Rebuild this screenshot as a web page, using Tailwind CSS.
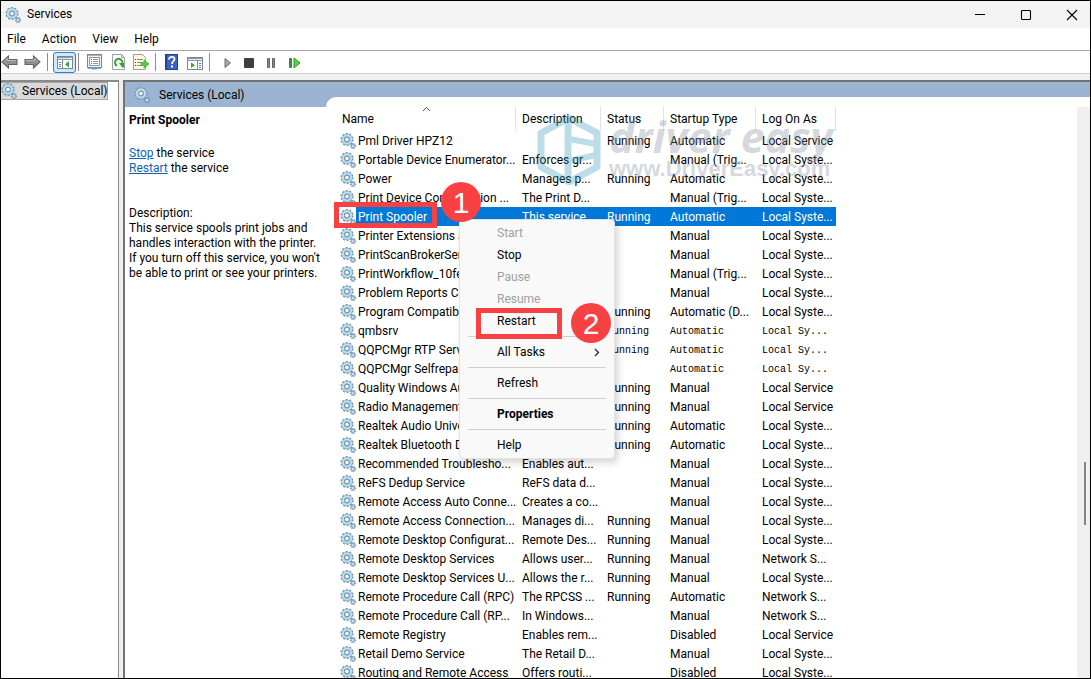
<!DOCTYPE html>
<html lang="en">
<head>
<meta charset="utf-8">
<title>Services</title>
<script src="https://cdn.jsdelivr.net/npm/@tailwindcss/browser@4"></script>
</head>
<body>
<svg class="hidden" aria-hidden="true">
  <symbol id="gear" viewBox="0 0 16 16">
    <circle cx="7" cy="6.500" r="5.600" fill="none" stroke="#7594ab" stroke-width="2" stroke-dasharray="1.900 1.600"/>
    <circle cx="7" cy="6.500" r="3.900" fill="#fff" stroke="#86b0cb" stroke-width="3.600"/>
    <circle cx="7" cy="6.500" r="4.100" fill="none" stroke="#bcdfef" stroke-width="2"/>
    <circle cx="7" cy="6.500" r="2.300" fill="#fff" stroke="#56788f" stroke-width=".8"/>
    <circle cx="13" cy="13" r="2.300" fill="none" stroke="#6b8aa2" stroke-width="1.400" stroke-dasharray="1.100 .7"/>
    <circle cx="13" cy="13" r="1.500" fill="#fff" stroke="#8ab2ca" stroke-width="1.300"/>
  </symbol>
  <symbol id="arrow" viewBox="0 0 17 14">
    <path d="M1 7 7.500 1v3.500H16v5H7.500V13Z" fill="#909090" stroke="#666" stroke-width="1.100"/>
    <path d="M3 6.700 6.700 3.200V5.600H15" fill="none" stroke="#bdbdbd"/>
  </symbol>
</svg>

<div class="relative flex h-screen flex-col overflow-hidden border border-black bg-white font-['Roboto','Noto_Sans',sans-serif] text-[12px] leading-[19px] text-black">
  <header class="flex h-[27px] shrink-0 items-center gap-[10px] bg-[#f3f3f3] pl-1">
    <svg class="size-4"><use href="#gear"/></svg>
    <h1 class="-ml-1 grow">Services</h1>
    <button class="grid h-6 w-9 place-items-center" aria-label="Minimize"><svg class="h-3 w-3" viewBox="0 0 12 12"><path d="M1 5.500h10" stroke="#000"/></svg></button>
    <button class="grid h-6 w-9 place-items-center" aria-label="Maximize"><svg class="h-3 w-3" viewBox="0 0 12 12"><rect x="1.500" y="1.500" width="9" height="9" rx=".8" fill="none" stroke="#000" stroke-width="1.100"/></svg></button>
    <button class="grid h-6 w-9 place-items-center" aria-label="Close"><svg class="h-3 w-3" viewBox="0 0 12 12"><path d="m1 1 10 10M11 1 1 11" stroke="#000" stroke-width="1.100"/></svg></button>
  </header>

  <nav class="flex h-[23px] shrink-0 items-center gap-4 border-b border-[#a8a8a8] pl-[6px]">
    <button>File</button><button>Action</button><button>View</button><button>Help</button>
  </nav>

  <div class="flex h-[23px] shrink-0 items-center border-b border-[#d0d0d0]" role="toolbar">
    <button aria-label="Back"><svg class="h-[14px] w-[17px]"><use href="#arrow"/></svg></button>
    <button class="ml-[6px] -scale-x-100" aria-label="Forward"><svg class="h-[14px] w-[17px]"><use href="#arrow"/></svg></button>
    <span class="ml-[6px] h-[18px] w-px bg-[#8c8c8c]"></span>
    <button class="ml-[5px] grid h-[21px] w-[23px] place-items-center rounded-[3px] border border-[#2c80c5] bg-[#cfe8fb]" aria-label="Show console tree">
      <svg class="h-[13px] w-4" viewBox="0 0 16 13"><rect x=".5" y=".5" width="15" height="12" fill="#fff" stroke="#7d8791"/><path d="M1 1.500h14M1 3.500h14" stroke="#8c98a4"/><path d="M1 2.500h11" stroke="#dfe6ec"/><path d="M5.500 4v8" stroke="#7d8791"/><path d="M2 6.500h2M2 8.500h2M2 10.500h2" stroke="#5d7890"/><path d="m12 5-4 3.200 4 3.200Z" fill="#3aa635"/></svg>
    </button>
    <span class="ml-[2px] h-[18px] w-px bg-[#8c8c8c]"></span>
    <button class="ml-[8px]" aria-label="Properties"><svg class="size-4" viewBox="0 0 16 16"><rect x=".5" y=".5" width="14" height="13" fill="#f4f7fa" stroke="#7d8791"/><path d="M1 1.500h13" stroke="#a9b4be"/><rect x="2.500" y="3.500" width="10" height="8" fill="#fff" stroke="#8e9aa5"/><path d="M4 5.500h1M4 7.500h1M4 9.500h1" stroke="#3f79ad"/><path d="M6 5.500h5M6 7.500h5M6 9.500h5" stroke="#8e9aa5"/><path d="M1 14.500h4M10 14.500h4" stroke="#9aa6b0"/><path d="M5 14.500h5" stroke="#5aa5dc" stroke-width="2"/></svg></button>
    <button class="ml-[8px]" aria-label="Refresh"><svg class="size-4" viewBox="0 0 16 16"><path d="M1.500.5h9l3 3v12h-12Z" fill="#fff" stroke="#9aa2aa"/><path d="M10.500.5v3h3" fill="none" stroke="#9aa2aa"/><path d="M6 11.800a3.700 3.700 0 1 1 5-1.500" fill="none" stroke="#37a532" stroke-width="2"/><path d="M8 9h5v4.500H11Z" fill="#37a532"/></svg></button>
    <button class="ml-[6px]" aria-label="Export list"><svg class="size-4" viewBox="0 0 16 16"><path d="M.5.500h9l3 3v12H.5Z" fill="#fdf8df" stroke="#a79f7d"/><path d="M2 5.500h1M2 8.500h1M2 11.500h1" stroke="#444"/><path d="M4 5.500h6M4 8.500h4M4 11.500h4" stroke="#888"/><path d="M8 8.500h3V6l5 4-5 4v-2.500H8Z" fill="#55c94a" stroke="#2f9a2a" stroke-width=".6"/></svg></button>
    <span class="ml-[6px] h-[18px] w-px bg-[#8c8c8c]"></span>
    <button class="ml-[9px]" aria-label="Help"><svg class="h-4 w-[13px]" viewBox="0 0 13 16"><rect width="13" height="16" fill="#25409a"/><rect x="2" y="1" width="10" height="14" fill="#3d62c4"/><path d="M4 5.500C4 2 9.500 2.300 9.500 5.200 9.500 7.200 7 7.300 7 10" fill="none" stroke="#fff" stroke-width="1.800"/><path d="M6 11.500h2v2H6z" fill="#fff"/></svg></button>
    <button class="ml-[9px]" aria-label="Show action pane"><svg class="mt-[2px] h-[13px] w-4" viewBox="0 0 16 13"><rect x=".5" y=".5" width="15" height="12" fill="#fff" stroke="#7d8791"/><path d="M1 1.500h14M1 3.500h14" stroke="#8c98a4"/><path d="M1 2.500h11" stroke="#dfe6ec"/><path d="M10.500 4v8" stroke="#7d8791"/><path d="M12 6.500h2M12 8.500h2M12 10.500h2" stroke="#5d7890"/><path d="m4 5.500 4 2.800-4 2.800Z" fill="#3aa635"/></svg></button>
    <span class="ml-[6px] h-[18px] w-px bg-[#8c8c8c]"></span>
    <button class="ml-[14px] pt-[2px]" aria-label="Start service"><svg class="h-3 w-2" viewBox="0 0 8 12"><path d="M1 1.500 6.500 6 1 10.500Z" fill="#a8a8a8" stroke="#6c6c6c"/></svg></button>
    <button class="ml-[11px] pt-[2px]" aria-label="Stop service"><svg class="h-3 w-3" viewBox="0 0 12 12"><rect x="1" y="1" width="10" height="10" rx="1" fill="#3e3e3e"/></svg></button>
    <button class="ml-[12px] pt-[2px]" aria-label="Pause service"><svg class="h-3 w-[9px]" viewBox="0 0 9 12"><path d="M.5 1.500h2v9h-2zM5.500 1.500h2v9h-2z" fill="#888" stroke="#666"/></svg></button>
    <button class="ml-[13px] pt-[2px]" aria-label="Restart service"><svg class="h-3 w-3" viewBox="0 0 12 12"><path d="M.500 1.500h2v9h-2z" fill="#3c8f38" stroke="#56705a"/><path d="M5 1 11 6 5 11Z" fill="#5ad04c" stroke="#2d9b28"/></svg></button>
  </div>

  <div class="flex min-h-0 grow bg-[#f0f0f0] pt-[6px]">
    <aside class="w-[118px] shrink-0 border-t-2 border-r border-[#8a8a8a] bg-white">
      <button class="flex h-[18px] w-[107px] items-center border border-[#a5a5a5] border-l-0 bg-[#d9d9d9] whitespace-nowrap">
        <svg class="size-4 shrink-0"><use href="#gear"/></svg><span class="ml-[5px]">Services (Local)</span>
      </button>
    </aside>

    <main class="ml-1 flex min-w-0 grow flex-col border-t-2 border-l-2 border-[#737373] bg-white">
      <div class="flex min-h-0 grow bg-[#9ab4d1]">
        <section class="flex w-[201px] shrink-0 flex-col">
          <div class="flex h-[25px] shrink-0 items-center pl-[9px]">
            <svg class="size-4"><use href="#gear"/></svg><h2 class="ml-[9px] pt-[2px]">Services (Local)</h2>
          </div>
          <div class="grow bg-white pl-1 leading-[15px] whitespace-nowrap">
            <h3 class="pt-[6px] font-bold">Print Spooler</h3>
            <p class="mt-[18px]"><a href="#stop" class="text-[#0f5fb8] underline">Stop</a> the service<br><a href="#restart" class="text-[#0f5fb8] underline">Restart</a> the service</p>
            <p class="mt-[30px]">Description:<br>This service spools print jobs and<br>handles interaction with the printer.<br>If you turn off this service, you won't<br>be able to print or see your printers.</p>
          </div>
        </section>

        <section class="mt-[15px] flex min-w-0 grow overflow-hidden rounded-tl-[10px] bg-white">
          <div class="min-w-0 grow overflow-hidden pl-[10px]">
            <table class="w-[500px] table-fixed border-collapse text-left whitespace-nowrap">
              <colgroup><col class="w-[180px]"><col class="w-[85px]"><col class="w-[63px]"><col class="w-[92px]"><col class="w-[80px]"></colgroup>
              <thead>
                <tr class="h-[34px] [&>th]:p-0 [&>th]:pt-[9px] [&>th]:font-normal">
                  <th><div class="relative h-[25px] border-r border-[#e2e2e2] pt-1 pl-[6px]">Name<svg class="absolute top-0 left-[86px] h-[6px] w-[9px]" viewBox="0 0 9 6"><path d="m1 5 3.500-3.500L8 5" fill="none" stroke="#555"/></svg></div></th>
                  <th><div class="h-[25px] border-r border-[#e2e2e2] pt-1 pl-[6px]">Description</div></th>
                  <th><div class="h-[25px] border-r border-[#e2e2e2] pt-1 pl-[6px]">Status</div></th>
                  <th><div class="h-[25px] border-r border-[#e2e2e2] pt-1 pl-[6px]">Startup Type</div></th>
                  <th><div class="h-[25px] border-r border-[#e2e2e2] pt-1 pl-[6px]">Log On As</div></th>
                </tr>
              </thead>
              <tbody id="rows" class="leading-[17px]"></tbody>
            </table>
          </div>
          <div class="mt-[10px] flex w-[13px] shrink-0 justify-center bg-[#f0f0f0]"><span class="mt-[355px] ml-[2px] h-[63px] w-[2px] bg-[#858585]"></span></div>
        </section>
      </div>
    </main>
  </div>

  <div class="pointer-events-none absolute top-[112px] left-[534px] flex items-center gap-[6px] opacity-35" aria-hidden="true">
    <svg class="h-[74px] w-[68px]" viewBox="0 0 68 74"><g fill="none" stroke="#3f9fbe" stroke-linejoin="round"><path d="M34 5 62 20v34L34 69 6 54V20Z" stroke-width="7"/><path d="M33 6v62" stroke-width="7"/><path d="m34 26 27 5M34 48l27-6" stroke-width="6"/></g></svg>
    <div class="font-['Liberation_Sans',sans-serif] font-bold whitespace-nowrap text-[#8995a3]">
      <div class="font-['Open_Sans',sans-serif] text-[43px] leading-[38px] italic">driver easy</div>
      <div class="text-[22px] leading-[26px]">www.DriverEasy.com</div>
    </div>
  </div>

  <div role="menu" class="absolute top-[218px] left-[458px] flex w-[156px] flex-col rounded-[4px] border border-[#e3e3e3] bg-[#f9f9f9] py-[2px] shadow-[3px_4px_7px_rgba(0,0,0,0.16)] [&>button]:flex [&>button]:h-[22px] [&>button]:items-center [&>button]:pt-px [&>button]:pr-[14px] [&>button]:pl-[37px] [&>hr]:mx-2 [&>hr]:my-1 [&>hr]:border-[#cfcfcf]">
    <button role="menuitem" disabled class="text-[#a0a0a0]">Start</button>
    <button role="menuitem">Stop</button>
    <button role="menuitem" disabled class="text-[#a0a0a0]">Pause</button>
    <button role="menuitem" disabled class="text-[#a0a0a0]">Resume</button>
    <button role="menuitem">Restart</button>
    <hr>
    <button role="menuitem" class="justify-between">All Tasks<svg class="h-[9px] w-[6px]" viewBox="0 0 6 9"><path d="m1 1 3.500 3.500L1 8" fill="none" stroke="#222" stroke-width="1.200"/></svg></button>
    <hr>
    <button role="menuitem">Refresh</button>
    <hr>
    <button role="menuitem" class="font-bold">Properties</button>
    <hr>
    <button role="menuitem">Help</button>
  </div>

  <div class="absolute top-[201px] left-[333px] h-[26px] w-[103px] border-5 border-[#f94144]"></div>
  <div class="absolute top-[307px] left-[475px] h-[31px] w-[86px] border-5 border-[#f94144]"></div>
  <div class="absolute top-[181px] left-[440px] grid size-10 place-items-center rounded-full bg-[#f94144] font-['Liberation_Sans',sans-serif] text-[30px] text-white">1</div>
  <div class="absolute top-[302px] left-[570px] grid size-10 place-items-center rounded-full bg-[#f94144] font-['Liberation_Sans',sans-serif] text-[30px] text-white">2</div>
</div>

<script>
const S = 'Local Syste...', L = 'Local Service', N = 'Network S...', R = 'Running', M = 'Manual', A = 'Automatic', T = 'Manual (Trig...';
const services = [
  ['Pml Driver HPZ12', '', R, A, L],
  ['Portable Device Enumerator...', 'Enforces gr...', '', T, S],
  ['Power', 'Manages p...', R, A, S],
  ['Print Device Configuration ...', 'The Print D...', '', T, S],
  ['Print Spooler', 'This service', R, A, S],
  ['Printer Extensions and Not...', '', '', M, S],
  ['PrintScanBrokerService', '', '', M, S],
  ['PrintWorkflow_10fe', '', '', T, S],
  ['Problem Reports Control P...', '', '', M, S],
  ['Program Compatibility Assi...', '', R, 'Automatic (D...', S],
  ['qmbsrv', '', R, A, 'Local Sy...'],
  ['QQPCMgr RTP Service', '', R, A, 'Local Sy...'],
  ['QQPCMgr Selfrepair Service', '', '', A, 'Local Sy...'],
  ['Quality Windows Audio Vid...', '', R, M, L],
  ['Radio Management Service', '', R, M, L],
  ['Realtek Audio Universal Se...', '', R, A, S],
  ['Realtek Bluetooth Device M...', '', R, A, S],
  ['Recommended Troublesho...', 'Enables aut...', '', M, S],
  ['ReFS Dedup Service', 'ReFS data d...', '', M, S],
  ['Remote Access Auto Conne...', 'Creates a co...', '', M, S],
  ['Remote Access Connection...', 'Manages di...', R, M, S],
  ['Remote Desktop Configurat...', 'Remote Des...', R, M, S],
  ['Remote Desktop Services', 'Allows user...', R, M, N],
  ['Remote Desktop Services U...', 'Allows the r...', R, M, S],
  ['Remote Procedure Call (RPC)', 'The RPCSS ...', R, A, N],
  ['Remote Procedure Call (RP...', 'In Windows...', '', M, N],
  ['Remote Registry', 'Enables rem...', '', 'Disabled', L],
  ['Retail Demo Service', 'The Retail D...', '', M, S],
  ['Routing and Remote Access', 'Offers routi...', '', 'Disabled', S],
];
document.getElementById('rows').innerHTML = services.map(([name, ...rest]) => {
  const fill = name === 'Print Spooler' ? 'bg-[#0078d7] text-white' : '';
  const mono = /^(qmb|QQPC)/.test(name) ? "font-['Liberation_Mono',monospace] text-[10px]" : '';
  return `<tr class="h-[19px]"><td class="p-0"><div class="flex h-[19px] items-center pl-1"><svg class="size-4 shrink-0"><use href="#gear"/></svg><span class="grow pt-[2px] pl-[2px] ${fill}">${name}</span></div></td>`
    + rest.map(v => `<td class="h-[19px] p-0 pt-[2px] pl-[6px] ${fill} ${mono}">${v}</td>`).join('') + '</tr>';
}).join('');
</script>
</body>
</html>
